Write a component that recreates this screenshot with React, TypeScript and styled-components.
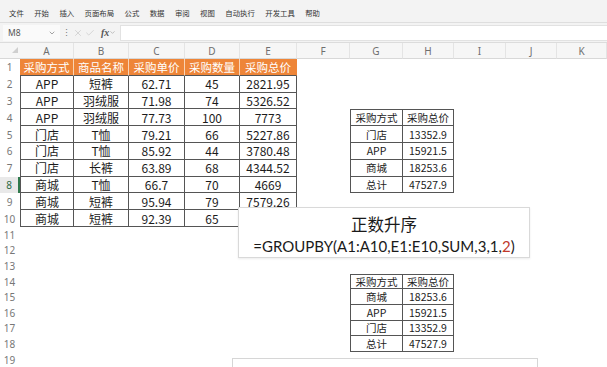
import React from 'react';
import styled, { createGlobalStyle } from 'styled-components';
import { ChevronDown, X, Check } from 'lucide-react';

const GlobalStyle = createGlobalStyle`
  html, body { margin: 0; padding: 0; background: #fff; }
  body { font-family: "Noto Sans CJK SC", "Noto Sans", sans-serif; }
  * { box-sizing: border-box; }
`;

const Window = styled.div`
  width: 607px;
  height: 367px;
  overflow: hidden;
  display: flex;
  flex-direction: column;
  background: #fff;
`;

const MenuBar = styled.div`
  height: 23px;
  flex-shrink: 0;
  display: flex;
  align-items: center;
  gap: 10.4px;
  padding: 3px 0 0 9px;
  background: #f3f3f3;
  border-bottom: 1px solid #dedede;
  font-size: 7.4px;
  color: #333;
`;

const FormulaRow = styled.div`
  height: 20px;
  flex-shrink: 0;
  display: flex;
  align-items: center;
  background: #f3f3f3;
  border-bottom: 1px solid #dcdcdc;
  padding-left: 3px;
  color: #9a9a9a;
`;

const NameBox = styled.div`
  width: 57px;
  height: 16px;
  display: flex;
  align-items: center;
  justify-content: space-between;
  padding: 0 4px 0 5px;
  background: #fafafa;
  font-family: "Noto Sans", sans-serif;
  font-size: 8.5px;
  color: #555;
`;

const Dots = styled.span`
  width: 12px;
  text-align: center;
  font-size: 9px;
  color: #777;
`;

const IconSlot = styled.span`
  width: 12px;
  display: flex;
  justify-content: center;
  color: #c2c2c2;
`;

const Fx = styled.span`
  margin-left: 5px;
  font-family: "Liberation Serif", serif;
  font-style: italic;
  font-weight: bold;
  font-size: 10px;
  color: #555;
`;

const FormulaInput = styled.div`
  flex: 1;
  height: 16px;
  margin-left: 4px;
  background: #fff;
  border-top: 1px solid #e2e2e2;
  border-bottom: 1px solid #e2e2e2;
  border-left: 1px solid #e2e2e2;
`;

const Sheet = styled.div<{ $cols: string }>`
  position: relative;
  display: grid;
  grid-template-columns: ${p => p.$cols};
  grid-template-rows: 16px repeat(10, 16.8px) repeat(9, 15.6px);
`;

const Corner = styled.div`
  display: flex;
  justify-content: flex-end;
  align-items: flex-end;
  padding: 0 2px 5px 0;
  background: #f6f6f6;
  border-bottom: 1px solid #d8d8d8;
`;

const CornerMark = styled.div`
  width: 0;
  height: 0;
  border-left: 6px solid transparent;
  border-bottom: 6px solid #cfcfcf;
`;

const ColHead = styled.div`
  display: flex;
  align-items: center;
  justify-content: center;
  background: #f6f6f6;
  border-bottom: 1px solid #d8d8d8;
  border-right: 1px solid #e4e4e4;
  font-family: "Noto Sans", sans-serif;
  font-size: 10px;
  color: #6f6f6f;
`;

const RowHead = styled.div<{ $active?: boolean }>`
  display: flex;
  align-items: center;
  justify-content: center;
  font-family: "Noto Sans", sans-serif;
  font-size: 10px;
  color: ${p => (p.$active ? '#2e6b45' : '#777')};
  background: ${p => (p.$active ? '#e9e9e9' : '#fff')};
  border-right: ${p => (p.$active ? '2px solid #2f7a4d' : '1px solid transparent')};
`;

type Kind = 'head' | 'box' | 'none';

const Cell = styled.div<{ $kind: Kind; $small?: boolean; $top?: boolean; $left?: boolean; $last?: boolean }>`
  display: flex;
  align-items: center;
  justify-content: center;
  white-space: nowrap;
  font-size: ${p => (p.$small ? '10.5px' : p.$kind === 'head' ? '11.5px' : '12px')};
  color: ${p => (p.$kind === 'head' ? '#fff' : '#1c1c1c')};
  background: ${p => (p.$kind === 'head' ? '#ee8538' : 'transparent')};
  border-right: 1px solid
    ${p => (p.$kind === 'box' ? '#555' : p.$kind === 'head' && !p.$last ? '#f9d3b4' : 'transparent')};
  border-bottom: 1px solid ${p => (p.$kind === 'none' ? 'transparent' : '#555')};
  border-top: ${p => (p.$top ? '1px solid #555' : '0')};
  border-left: ${p => (p.$left ? '1px solid #555' : '0')};
`;

const TextBox = styled.div`
  position: absolute;
  left: 238px;
  top: 164px;
  width: 292px;
  height: 51px;
  padding-top: 5px;
  display: flex;
  flex-direction: column;
  align-items: center;
  background: #fff;
  border: 1px solid #d9d9d9;
  box-shadow: 0 1px 2px rgba(0, 0, 0, 0.08);
  color: #1a1a1a;
`;

const BoxTitle = styled.div`
  font-size: 16.5px;
  line-height: 22px;
`;

const BoxFormula = styled.div`
  font-family: Lato, "Liberation Sans", sans-serif;
  font-size: 15px;
  line-height: 22px;
  white-space: nowrap;
`;

const Red = styled.span`
  color: #c0392b;
`;

const NoteBox = styled.div`
  position: absolute;
  left: 232px;
  top: 315px;
  width: 306px;
  height: 40px;
  background: #fff;
  border: 1px solid #d6d6d6;
`;

const menuItems = ['文件', '开始', '插入', '页面布局', '公式', '数据', '审阅', '视图', '自动执行', '开发工具', '帮助'];
const colLetters = ['A', 'B', 'C', 'D', 'E', 'F', 'G', 'H', 'I', 'J', 'K'];
const colWidths = [54, 55, 56, 55, 57, 53, 53, 51, 52, 51, 50];

const mainTable = [
  ['采购方式', '商品名称', '采购单价', '采购数量', '采购总价'],
  ['APP', '短裤', '62.71', '45', '2821.95'],
  ['APP', '羽绒服', '71.98', '74', '5326.52'],
  ['APP', '羽绒服', '77.73', '100', '7773'],
  ['门店', 'T恤', '79.21', '66', '5227.86'],
  ['门店', 'T恤', '85.92', '44', '3780.48'],
  ['门店', '长裤', '63.89', '68', '4344.52'],
  ['商城', 'T恤', '66.7', '70', '4669'],
  ['商城', '短裤', '95.94', '79', '7579.26'],
  ['商城', '短裤', '92.39', '65', '6005.35'],
];

const sumAsc = [
  ['采购方式', '采购总价'],
  ['门店', '13352.9'],
  ['APP', '15921.5'],
  ['商城', '18253.6'],
  ['总计', '47527.9'],
];

const sumDesc = [
  ['采购方式', '采购总价'],
  ['商城', '18253.6'],
  ['APP', '15921.5'],
  ['门店', '13352.9'],
  ['总计', '47527.9'],
];

type CellInfo = { text: string; kind: Kind; small?: boolean; top?: boolean; left?: boolean; last?: boolean };

// row is the 1-based sheet row, col the 0-based column index
function cellAt(row: number, col: number): CellInfo {
  if (row <= 10 && col <= 4) {
    const text = mainTable[row - 1][col];
    if (row === 1) return { text, kind: 'head', last: col === 4 };
    return { text, kind: 'box', left: col === 0 };
  }
  const small = (data: string[][], startRow: number): CellInfo | null => {
    const r = row - startRow;
    if (r >= 0 && r < data.length && (col === 6 || col === 7)) {
      return { text: data[r][col - 6], kind: 'box', small: true, top: r === 0, left: col === 6 };
    }
    return null;
  };
  return small(sumAsc, 4) || small(sumDesc, 14) || { text: '', kind: 'none' };
}

const rows = Array.from({ length: 19 }, (_, i) => i + 1);

const App: React.FC = () => {
  const cols = ['20px', ...colWidths.map(w => `${w}px`)].join(' ');

  return (
    <Window>
      <GlobalStyle />
      <MenuBar>
        {menuItems.map(m => (
          <span key={m}>{m}</span>
        ))}
      </MenuBar>
      <FormulaRow>
        <NameBox>
          <span>M8</span>
          <ChevronDown size={8} color="#777" />
        </NameBox>
        <Dots>⋮</Dots>
        <IconSlot>
          <X size={10} strokeWidth={1.5} />
        </IconSlot>
        <IconSlot>
          <Check size={10} strokeWidth={1.5} />
        </IconSlot>
        <Fx>fx</Fx>
        <ChevronDown size={7} color="#999" />
        <FormulaInput />
      </FormulaRow>
      <Sheet $cols={cols}>
        <Corner>
          <CornerMark />
        </Corner>
        {colLetters.map(l => (
          <ColHead key={l}>{l}</ColHead>
        ))}
        {rows.map(r => (
          <React.Fragment key={r}>
            <RowHead $active={r === 8}>{r}</RowHead>
            {colLetters.map((l, c) => {
              const cell = cellAt(r, c);
              return (
                <Cell
                  key={l + r}
                  $kind={cell.kind}
                  $small={cell.small}
                  $top={cell.top}
                  $left={cell.left}
                  $last={cell.last}
                >
                  {cell.text}
                </Cell>
              );
            })}
          </React.Fragment>
        ))}
        <TextBox>
          <BoxTitle>正数升序</BoxTitle>
          <BoxFormula>
            =GROUPBY(A1:A10,E1:E10,SUM,3,1,<Red>2</Red>)
          </BoxFormula>
        </TextBox>
        <NoteBox />
      </Sheet>
    </Window>
  );
};

export default App;
